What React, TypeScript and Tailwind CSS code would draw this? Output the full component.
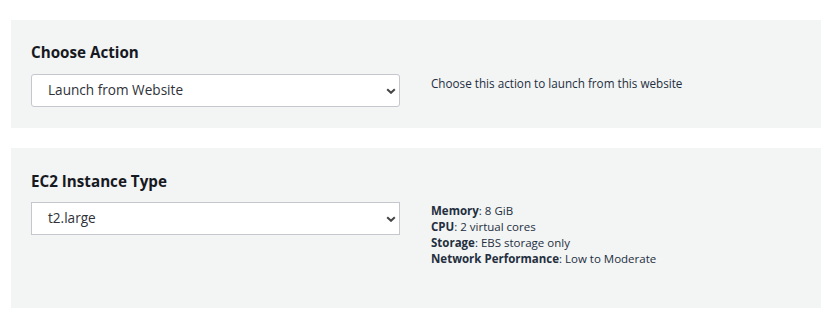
const font = { fontFamily: '"Open Sans", "Noto Sans", Arial, sans-serif' }

function Chevron() {
  return (
    <svg
      viewBox="0 0 10 6"
      className="pointer-events-none absolute right-[4px] top-1/2 h-[6px] w-[10px] -translate-y-1/2"
    >
      <path d="M1.2 1.2l3.8 3.6 3.8-3.6" fill="none" stroke="#444" strokeWidth="2" />
    </svg>
  )
}

function Dropdown({ value, rounded }: { value: string; rounded?: boolean }) {
  return (
    <div className="relative w-[369px] shrink-0">
      <div
        className={
          'flex h-[33px] items-center border border-[#c6c6cd] bg-white pl-[16px] text-[13.6px] text-[#2f3238] ' +
          (rounded ? 'rounded-[3px]' : '')
        }
      >
        {value}
      </div>
      <Chevron />
    </div>
  )
}

function Field({ label, value }: { label: string; value: string }) {
  return (
    <p className="leading-[16px]">
      <span className="font-bold">{label}</span>: {value}
    </p>
  )
}

export default function App() {
  return (
    <div className="min-h-[317px] bg-white pt-[20px] pl-[11px] pr-[7px] text-[#16191f]" style={font}>
      <section className="bg-[#f3f4f4] px-[20px] pt-[20px] pb-[21px]">
        <h2 className="mb-[10px] text-[15.2px] font-bold leading-[24px] text-[#16191f]">Choose Action</h2>
        <div className="flex items-start gap-[31px]">
          <Dropdown value="Launch from Website" rounded />
          <p className="pt-[1px] text-[11.7px] leading-[16px] text-[#232f3e]">
            Choose this action to launch from this website
          </p>
        </div>
      </section>

      <section className="mt-[20px] bg-[#f3f4f4] px-[20px] pt-[21px] pb-[41px]">
        <h2 className="mb-[9px] text-[15.2px] font-bold leading-[24px] text-[#16191f]">EC2 Instance Type</h2>
        <div className="flex items-start gap-[31px]">
          <Dropdown value="t2.large" />
          <div className="pt-[1px] text-[11.5px] text-[#232f3e]">
            <Field label="Memory" value="8 GiB" />
            <Field label="CPU" value="2 virtual cores" />
            <Field label="Storage" value="EBS storage only" />
            <Field label="Network Performance" value="Low to Moderate" />
          </div>
        </div>
      </section>
    </div>
  )
}
